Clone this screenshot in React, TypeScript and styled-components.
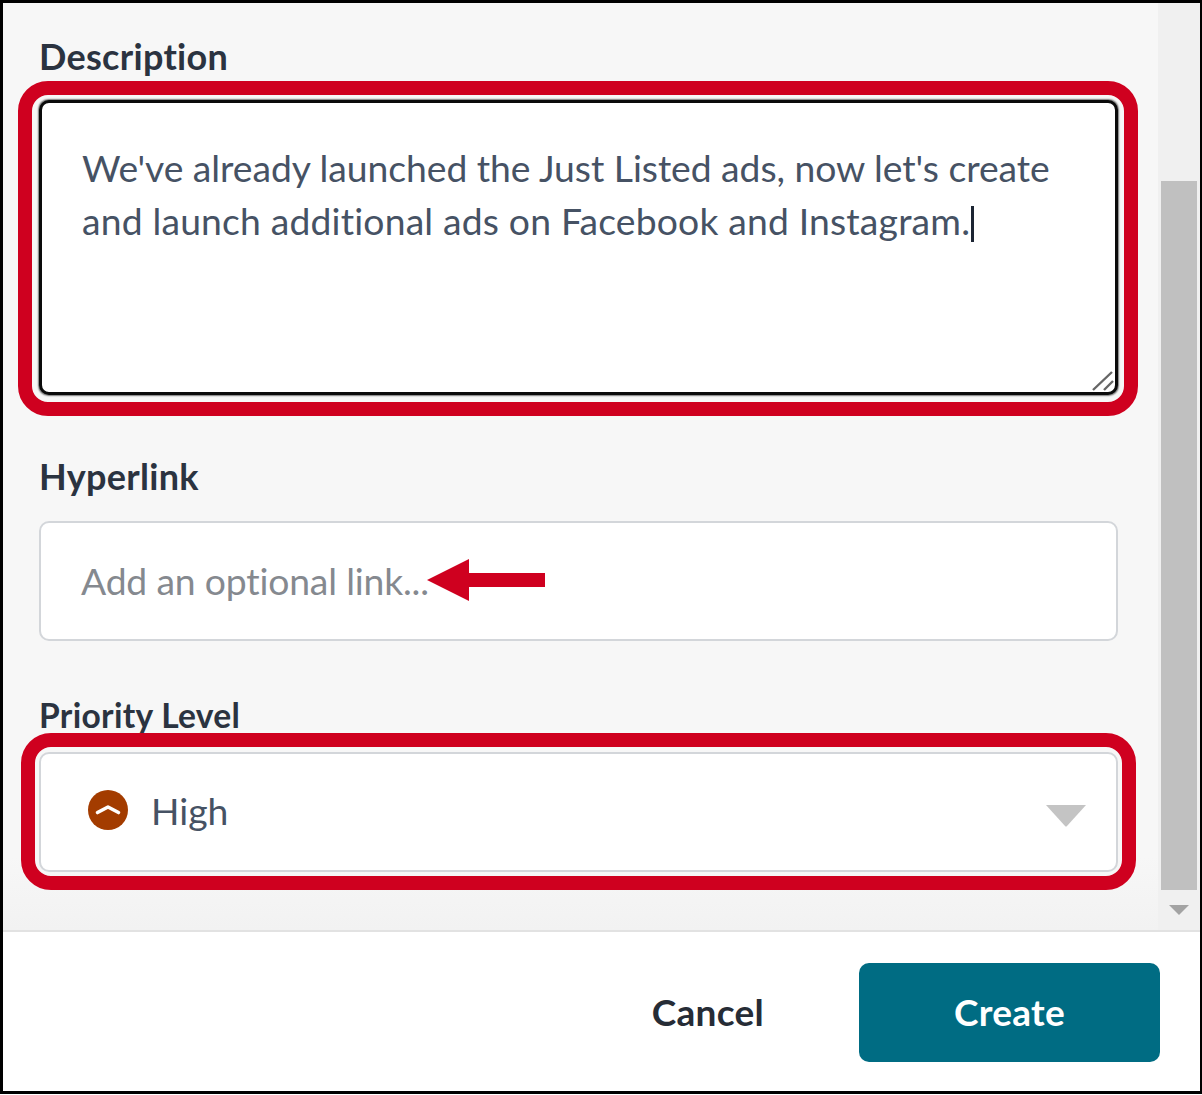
import React from "react";
import styled, { createGlobalStyle } from "styled-components";

const Global = createGlobalStyle`
  html, body { margin: 0; padding: 0; background: #fff; }
  * { box-sizing: border-box; }
`;

const Frame = styled.div`
  width: 1202px;
  height: 1094px;
  border: 3px solid #000;
  border-right-width: 2px;
  display: flex;
  flex-direction: column;
  font-family: "Lato", "Open Sans", sans-serif;
  background: #fff;
`;

const ScrollArea = styled.div`
  height: 929px;
  display: flex;
  background: linear-gradient(#f7f7f7 92%, #f2f2f2);
  border-bottom: 2px solid #e2e2e2;
`;

const Form = styled.div`
  flex: 1;
  padding: 0 40px 0 36px;
  display: flex;
  flex-direction: column;
`;

const Label = styled.div<{ $top: number; $size?: number }>`
  margin-top: ${(p) => p.$top}px;
  height: 40px;
  line-height: 40px;
  font-size: ${(p) => p.$size ?? 36}px;
  letter-spacing: 0.3px;
  font-weight: 700;
  color: #2b3340;
`;

const Field = styled.div<{ $height: number; $top: number; $active?: boolean }>`
  position: relative;
  margin-top: ${(p) => p.$top}px;
  height: ${(p) => p.$height}px;
  background: #fff;
  border-radius: 10px;
  border: ${(p) => (p.$active ? "3px solid #0a0a0a" : "2px solid #d3d6da")};
  box-shadow: ${(p) => (p.$active ? "0 0 1.5px 0.5px #777" : "none")};
`;

const Highlight = styled.div<{ $l: number; $r: number; $t: number; $b: number }>`
  position: absolute;
  left: -${(p) => p.$l}px;
  right: -${(p) => p.$r}px;
  top: -${(p) => p.$t}px;
  bottom: -${(p) => p.$b}px;
  border: 14px solid #cf001f;
  border-radius: 30px;
  pointer-events: none;
`;

const TextValue = styled.div`
  padding: 38px 40px 0 40px;
  font-size: 37.3px;
  line-height: 53px;
  color: #465264;
  white-space: nowrap;
`;

const TextLine = styled.div<{ $spacing: number }>`
  letter-spacing: ${(p) => p.$spacing}px;
`;

const Caret = styled.span`
  display: inline-block;
  width: 3px;
  height: 36px;
  margin-left: 1px;
  background: #1c2533;
  vertical-align: -7px;
`;

const Grip = styled.svg`
  position: absolute;
  right: 0;
  bottom: 0;
`;

const Placeholder = styled.div`
  padding: 0 0 2px 40px;
  height: 100%;
  display: flex;
  align-items: center;
  font-size: 37.3px;
  letter-spacing: -0.18px;
  color: #85898f;
`;

const Arrow = styled.svg`
  position: absolute;
  left: 386px;
  top: 36px;
`;

const SelectRow = styled.div`
  height: 100%;
  display: flex;
  align-items: center;
  padding: 0 30px 4px 47px;
  gap: 23px;
`;

const SelectText = styled.span`
  flex: 1;
  font-size: 37.3px;
  color: #465264;
`;

const Caretdown = styled.svg`
  margin-top: 12px;
`;

const Track = styled.div`
  width: 42px;
  background: #f0f0f0;
  padding: 178px 3px 0 3px;
  display: flex;
  flex-direction: column;
  align-items: center;
`;

const Thumb = styled.div`
  flex: none;
  width: 36px;
  height: 709px;
  background: #c0c0c0;
`;

const TrackArrow = styled.svg`
  margin-top: 14px;
`;

const Footer = styled.div`
  flex: 1;
  display: flex;
  align-items: center;
  justify-content: flex-end;
  padding: 0 40px 0 0;
  background: #fff;
  gap: 95px;
`;

const CancelButton = styled.button`
  border: 0;
  background: none;
  padding: 0;
  font: 700 37px "Lato", sans-serif;
  letter-spacing: 0.3px;
  color: #262c36;
`;

const CreateButton = styled.button`
  width: 301px;
  height: 99px;
  margin-top: 2px;
  padding-bottom: 3px;
  border: 0;
  border-radius: 10px;
  background: #006c83;
  color: #fff;
  font: 700 37px "Lato", sans-serif;
  letter-spacing: 0.3px;
`;

export default function App() {
  return (
    <>
      <Global />
      <Frame>
        <ScrollArea>
          <Form>
            <Label $top={33}>Description</Label>
            <Field $top={24} $height={295} $active>
              <Highlight $l={24} $r={23} $t={22} $b={24} />
              <TextValue>
                <TextLine $spacing={-0.05}>We've already launched the Just Listed ads, now let's create</TextLine>
                <TextLine $spacing={0.17}>
                  and launch additional ads on Facebook and Instagram.
                  <Caret />
                </TextLine>
              </TextValue>
              <Grip width="26" height="26" viewBox="0 0 26 26">
                <path d="M4 24 L23 6 M15 24 L24 15" stroke="#666" strokeWidth="2.4" fill="none" />
              </Grip>
            </Field>
            <Label $top={61}>Hyperlink</Label>
            <Field $top={25} $height={120}>
              <Placeholder>Add an optional link...</Placeholder>
              <Arrow width="120" height="44" viewBox="0 0 120 44">
                <polygon points="0,21 42,0 42,14 118,14 118,28 42,28 42,42" fill="#cf001f" />
              </Arrow>
            </Field>
            <Label $top={54} $size={33.6}>Priority Level</Label>
            <Field $top={17} $height={120}>
              <Highlight $l={20} $r={20} $t={21} $b={20} />
              <SelectRow>
                <svg width="40" height="40" viewBox="0 0 40 40">
                  <circle cx="20" cy="20" r="20" fill="#a33c00" />
                  <path d="M9.5 22.5 L20 17 L30.5 22.5" fill="none" stroke="#fff" strokeWidth="3.6" strokeLinecap="round" strokeLinejoin="round" />
                </svg>
                <SelectText>High</SelectText>
                <Caretdown width="40" height="22" viewBox="0 0 40 22">
                  <path d="M0 0 H40 L21 21 Q20 22 19 21 Z" fill="#c4c4c4" />
                </Caretdown>
              </SelectRow>
            </Field>
          </Form>
          <Track>
            <Thumb />
            <TrackArrow width="20" height="12" viewBox="0 0 20 12">
              <polygon points="0,1 20,1 10,11" fill="#a3a3a3" />
            </TrackArrow>
          </Track>
        </ScrollArea>
        <Footer>
          <CancelButton>Cancel</CancelButton>
          <CreateButton>Create</CreateButton>
        </Footer>
      </Frame>
    </>
  );
}
